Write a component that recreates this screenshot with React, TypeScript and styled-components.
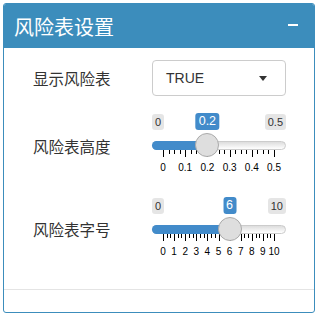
import React from 'react';
import styled, { createGlobalStyle } from 'styled-components';

const GlobalStyle = createGlobalStyle`
  html, body {
    margin: 0;
    padding: 0;
    background: #ffffff;
  }
  body {
    font-family: "Liberation Sans", "Noto Sans CJK SC", sans-serif;
    color: #333333;
  }
`;

const Page = styled.div`
  padding: 3px 0 0 3px;
`;

const Box = styled.div`
  width: 312px;
  height: 310px;
  box-sizing: border-box;
  border: 1px solid #3c8dbc;
  border-radius: 3px;
  background: #ffffff;
  display: flex;
  flex-direction: column;
  overflow: hidden;
`;

const Header = styled.div`
  height: 44px;
  background: #3c8dbc;
  display: flex;
  align-items: center;
  justify-content: space-between;
  padding: 0 16px 0 10px;
`;

const Title = styled.h3`
  margin: 0;
  font-family: "Noto Sans CJK SC", sans-serif;
  font-weight: 400;
  font-size: 20px;
  color: #ffffff;
`;

const Minus = styled.span`
  width: 10px;
  height: 2px;
  margin-top: -3px;
  background: #ffffff;
`;

const Body = styled.div`
  flex: 1;
  padding: 12px 27px 0 29px;
  display: flex;
  flex-direction: column;
`;

const Row = styled.div<{ $top: number; $align?: string }>`
  display: flex;
  align-items: ${p => p.$align || 'center'};
  margin-top: ${p => p.$top}px;
`;

const Label = styled.label<{ $pad?: number }>`
  width: 119px;
  flex-shrink: 0;
  font-family: "Noto Sans CJK SC", sans-serif;
  font-size: 15.5px;
  line-height: 20px;
  color: #333333;
  padding-top: ${p => p.$pad || 0}px;
`;

const Select = styled.div`
  width: 134px;
  height: 36px;
  box-sizing: border-box;
  border: 1px solid #cccccc;
  border-radius: 4px;
  display: flex;
  align-items: center;
  justify-content: space-between;
  padding: 0 18px 0 13px;
  font-size: 14px;
  color: #333333;
`;

const Caret = styled.span`
  width: 0;
  height: 0;
  border-left: 4.5px solid transparent;
  border-right: 4.5px solid transparent;
  border-top: 5px solid #333333;
`;

const Slider = styled.div`
  position: relative;
  width: 134px;
  height: 60px;
  font-family: "Liberation Sans", sans-serif;
`;

const Tag = styled.span<{ $value?: boolean }>`
  position: absolute;
  top: ${p => (p.$value ? 0 : 1)}px;
  padding: 1px 3px;
  border-radius: 3px;
  font-size: ${p => (p.$value ? 12.5 : 11)}px;
  line-height: ${p => (p.$value ? 15 : 14)}px;
  color: ${p => (p.$value ? '#ffffff' : '#333333')};
  background: ${p => (p.$value ? '#428bca' : 'rgba(0, 0, 0, 0.1)')};
  white-space: nowrap;
`;

const Track = styled.div`
  position: absolute;
  left: 0;
  right: 0;
  top: 28px;
  height: 9px;
  box-sizing: border-box;
  border: 1px solid #cccccc;
  border-radius: 16px;
  background: linear-gradient(to bottom, #dddddd 0%, #ffffff 100%);
`;

const Bar = styled.div`
  position: absolute;
  left: 0;
  top: 28px;
  height: 9px;
  border-radius: 16px 0 0 16px;
  background: #428bca;
`;

const Thumb = styled.div`
  position: absolute;
  top: 20px;
  width: 24px;
  height: 24px;
  margin-left: -12px;
  box-sizing: border-box;
  border: 1px solid #aaaaaa;
  border-radius: 50%;
  background: #dedede;
`;

const Grid = styled.div`
  position: absolute;
  left: 11px;
  width: 111px;
  top: 37px;
  height: 24px;
`;

const Tick = styled.span<{ $big?: boolean }>`
  position: absolute;
  top: 0;
  width: 1px;
  height: ${p => (p.$big ? 7 : 4)}px;
  background: #000000;
`;

const TickText = styled.span`
  position: absolute;
  top: 12px;
  font-size: 10px;
  line-height: 12px;
  color: #000000;
  transform: translateX(-50%);
  white-space: nowrap;
`;

const Footer = styled.div`
  height: 22px;
  border-top: 1px solid #e4e4e4;
`;

type RangeProps = {
  max: number;
  value: number;
  steps: number;
  small: number;
  format: (n: number) => string;
};

const Range = ({ max, value, steps, small, format }: RangeProps) => {
  const pos = 11 + (value / max) * 111;
  const ticks: React.ReactNode[] = [];
  for (let i = 0; i <= steps; i++) {
    const p = (i / steps) * 100;
    if (i > 0) {
      for (let z = 1; z <= small; z++) {
        const sp = p - ((100 / steps) * z) / (small + 1);
        ticks.push(<Tick key={`s${i}-${z}`} style={{ left: `${sp}%` }} />);
      }
    }
    ticks.push(<Tick $big key={`b${i}`} style={{ left: `${p}%` }} />);
    ticks.push(
      <TickText key={`t${i}`} style={{ left: `${p}%` }}>
        {format((i / steps) * max)}
      </TickText>
    );
  }
  return (
    <Slider>
      <Tag style={{ left: 0 }}>{format(0)}</Tag>
      <Tag style={{ right: 0 }}>{format(max)}</Tag>
      <Track />
      <Bar style={{ width: pos }} />
      <Grid>{ticks}</Grid>
      <Thumb style={{ left: pos }} />
      <Tag $value style={{ left: pos, transform: 'translateX(-50%)' }}>
        {format(value)}
      </Tag>
    </Slider>
  );
};

const App = () => (
  <Page>
    <GlobalStyle />
    <Box>
      <Header>
        <Title>风险表设置</Title>
        <Minus />
      </Header>
      <Body>
        <Row $top={0}>
          <Label>显示风险表</Label>
          <Select>
            TRUE
            <Caret />
          </Select>
        </Row>
        <Row $top={17} $align="flex-start">
          <Label $pad={23}>风险表高度</Label>
          <Range max={0.5} value={0.2} steps={5} small={3} format={n => String(Math.round(n * 10) / 10)} />
        </Row>
        <Row $top={24} $align="flex-start">
          <Label $pad={22}>风险表字号</Label>
          <Range max={10} value={6} steps={10} small={2} format={n => String(Math.round(n))} />
        </Row>
      </Body>
      <Footer />
    </Box>
  </Page>
);

export default App;
